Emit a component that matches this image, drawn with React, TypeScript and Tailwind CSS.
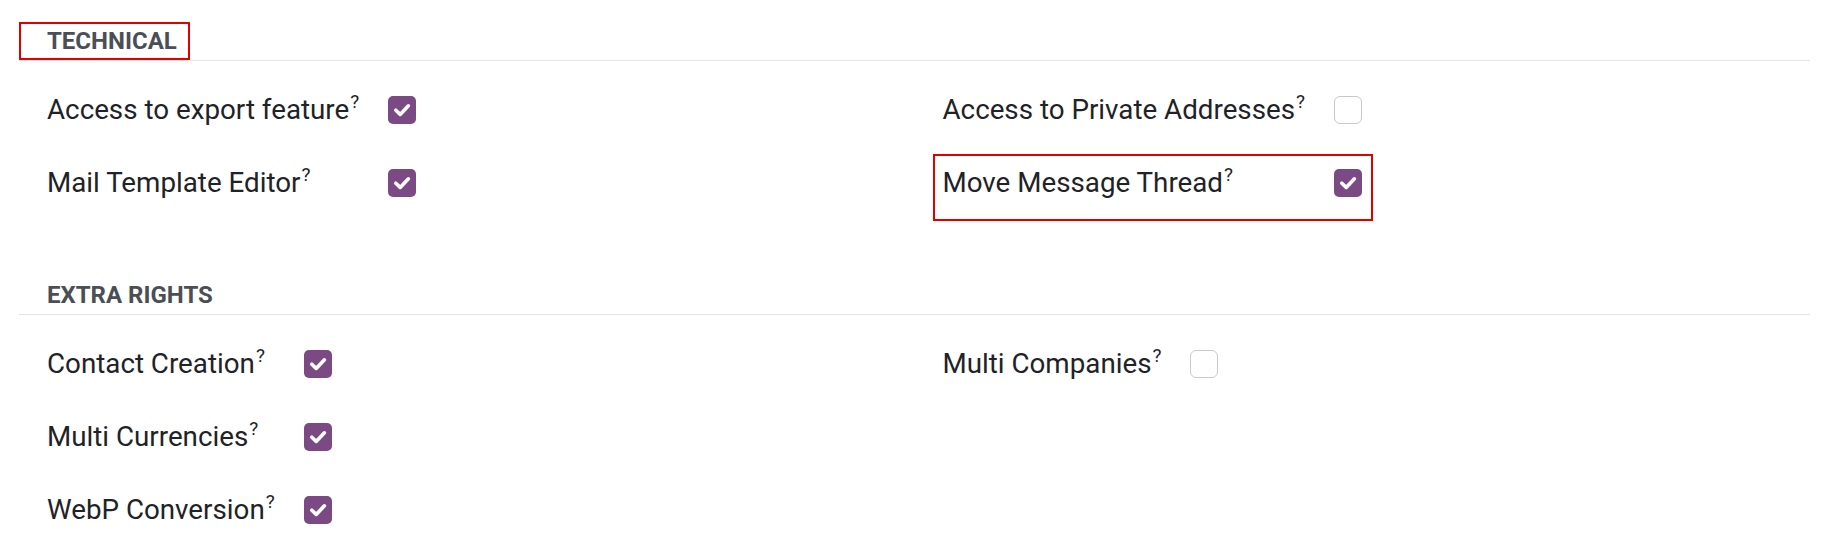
import React from "react";

type Item = { label: string; checked: boolean };

function Check({ checked }: { checked: boolean }) {
  if (!checked) {
    return (
      <div className="w-[28px] h-[28px] rounded-[6px] border border-[#c9c9c9] bg-white" />
    );
  }
  return (
    <div className="w-[28px] h-[28px] rounded-[5px] bg-[#7b4a84] flex items-center justify-center">
      <svg width="28" height="28" viewBox="0 0 28 28" fill="none">
        <path
          d="M7.8 14.2 L12.2 18.4 L20.4 9.8"
          stroke="white"
          strokeWidth="3.6"
          strokeLinecap="round"
          strokeLinejoin="round"
        />
      </svg>
    </div>
  );
}

function Column({ items }: { items: Item[] }) {
  return (
    <div className="pl-[28px]">
      <div className="grid grid-cols-[max-content_1fr] gap-x-[27px]">
        {items.map((it) => (
          <React.Fragment key={it.label}>
            <div className="h-[73px] flex items-center">
              <span className="text-[27.75px] text-[#1f2328] whitespace-nowrap">
                {it.label}
                <span className="text-[19px] leading-none align-[11px] ml-[1px] pr-[2px]">?</span>
              </span>
            </div>
            <div className="h-[73px] flex items-center">
              <Check checked={it.checked} />
            </div>
          </React.Fragment>
        ))}
      </div>
    </div>
  );
}

function Header({ title, className }: { title: string; className?: string }) {
  return (
    <div
      className={
        "pt-[27px] pb-[5px] pl-[28px] border-b border-[#e3e3e3] text-[24px] leading-[28px] font-bold text-[#4a4f56] " +
        (className ?? "")
      }
    >
      {title}
    </div>
  );
}

export default function App() {
  return (
    <div className="relative w-[1831px] h-[551px] bg-white font-['Roboto','Liberation_Sans',sans-serif] overflow-hidden">
      <div className="pl-[19px] pr-[21px]">
        <Header title="TECHNICAL" />
        <div className="grid grid-cols-2 mt-[12px]">
          <Column
            items={[
              { label: "Access to export feature", checked: true },
              { label: "Mail Template Editor", checked: true },
            ]}
          />
          <Column
            items={[
              { label: "Access to Private Addresses", checked: false },
              { label: "Move Message Thread", checked: true },
            ]}
          />
        </div>

        <Header title="EXTRA RIGHTS" className="mt-[35px]" />
        <div className="grid grid-cols-2 mt-[12px]">
          <Column
            items={[
              { label: "Contact Creation", checked: true },
              { label: "Multi Currencies", checked: true },
              { label: "WebP Conversion", checked: true },
            ]}
          />
          <Column items={[{ label: "Multi Companies", checked: false }]} />
        </div>
      </div>

      <div className="absolute left-[19px] top-[22px] w-[171px] h-[38px] border-2 border-[#e00000] pointer-events-none" />
      <div className="absolute left-[933px] top-[154px] w-[440px] h-[67px] border-2 border-[#e00000] pointer-events-none" />
    </div>
  );
}
